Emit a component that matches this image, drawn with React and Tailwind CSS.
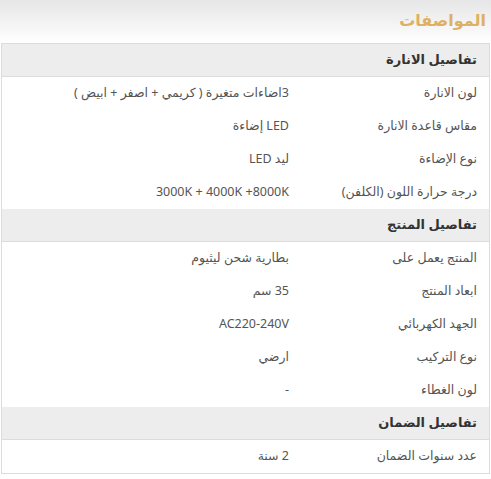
const SECTIONS = [
  {
    title: 'تفاصيل الانارة',
    rows: [
      ['لون الانارة', '3اضاءات متغيرة ( كريمي + اصفر + ابيض )'],
      ['مقاس قاعدة الانارة', 'LED إضاءة'],
      ['نوع الإضاءة', 'ليد LED'],
      ['درجة حرارة اللون (الكلفن)', '3000K + 4000K +8000K'],
    ],
  },
  {
    title: 'تفاصيل المنتج',
    rows: [
      ['المنتج يعمل على', 'بطارية شحن ليثيوم'],
      ['ابعاد المنتج', '35 سم'],
      ['الجهد الكهربائي', 'AC220-240V'],
      ['نوع التركيب', 'ارضي'],
      ['لون الغطاء', '-'],
    ],
  },
  {
    title: 'تفاصيل الضمان',
    rows: [['عدد سنوات الضمان', '2 سنة']],
  },
]

export default function App() {
  return (
    <div
      dir="rtl"
      className="w-[491px] h-[479px] bg-white overflow-hidden"
      style={{ fontFamily: '"Noto Sans", "DejaVu Sans", sans-serif' }}
    >
      <div className="h-[43px] bg-gradient-to-b from-[#e6e6e6] to-white pr-[5px] pt-[8px]">
        <h2 className="text-[16px] font-bold text-[#deb063] leading-[24px]">المواصفات</h2>
      </div>
      <div className="mx-[1px] border border-[#dcdcdc]">
        {SECTIONS.map((s) => (
          <div key={s.title}>
            <div className="h-[33px] flex items-center bg-[#ededed] border-b border-[#dcdcdc] pr-[12px] text-[13px] font-bold text-[#333]">
              {s.title}
            </div>
            {s.rows.map(([k, v]) => (
              <div key={k} className="h-[33px] flex items-center text-[12.5px] text-[#555]">
                <div className="w-[188px] pr-[12px] shrink-0">{k}</div>
                <div className="pr-[12px]">{v}</div>
              </div>
            ))}
          </div>
        ))}
      </div>
    </div>
  )
}
